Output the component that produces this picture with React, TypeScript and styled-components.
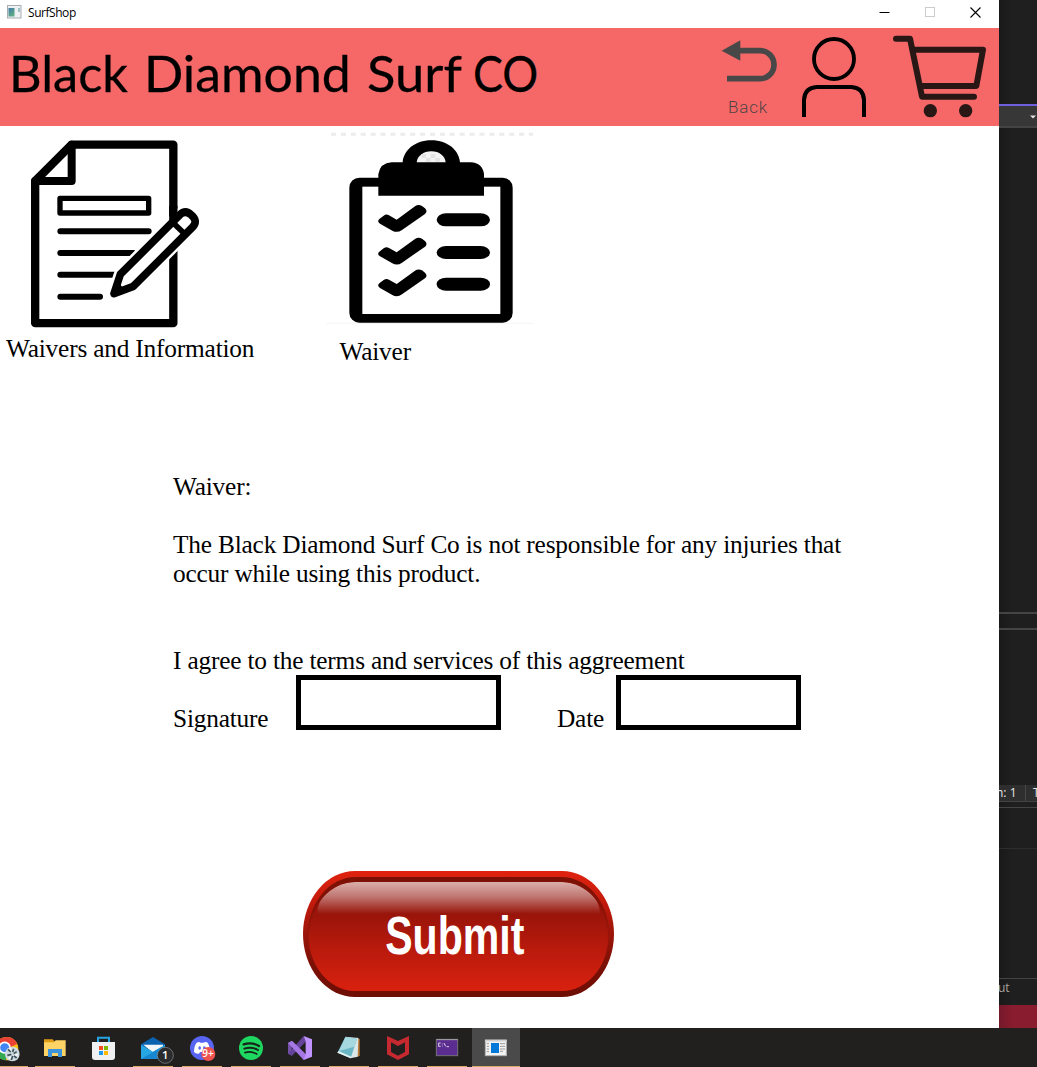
import React from "react";
import styled, { createGlobalStyle, css } from "styled-components";

const GlobalStyle = createGlobalStyle`
  *, *::before, *::after { box-sizing: border-box; }
  body { margin: 0; background: #1f1f1f; overflow: hidden; }
  svg { display: block; flex: none; }
`;

const serif = css`
  font-family: "Liberation Serif", "Times New Roman", serif;
  font-size: 25.33px;
  line-height: 29px;
  letter-spacing: -0.185px;
  color: #000;
`;

const Desktop = styled.div`
  display: grid;
  grid-template-columns: 999px 38px;
  grid-template-rows: 1028px 39px;
  width: 1037px;
  height: 1067px;
  overflow: hidden;
`;

const AppWindow = styled.main`
  display: flex;
  flex-direction: column;
  background: #fff;
  min-width: 0;
`;

const TitleBar = styled.div`
  display: flex;
  align-items: center;
  height: 28px;
  padding: 0 18px 4px 7px;
`;

const WindowName = styled.span`
  flex: 1;
  margin-left: 6px;
  padding-top: 2px;
  font: 12px/16px "Open Sans", sans-serif;
  letter-spacing: -0.45px;
  color: #000;
`;

const WindowControls = styled.div`
  display: flex;
  gap: 34.5px;
`;

const Header = styled.header`
  display: flex;
  align-items: flex-start;
  height: 98px;
  background: #f66868;
`;

const Brand = styled.h1`
  flex: 1;
  display: flex;
  margin: 13px 0 0 9px;
  font: 400 51px/64px Lato, Calibri, sans-serif;
  color: #000;
`;

const BrandWord = styled.span<{ $width: number; $stretch: number }>`
  flex: none;
  width: ${(p) => p.$width / p.$stretch}px;
  margin-right: ${(p) => p.$width - p.$width / p.$stretch}px;
  transform-origin: 0 50%;
  transform: scaleX(${(p) => p.$stretch});
  -webkit-text-stroke: 0.3px #000;
`;

const BackButton = styled.button`
  display: flex;
  flex-direction: column;
  align-items: center;
  width: 58px;
  margin: 12px 24px 0 0;
  padding: 0;
  border: 0;
  background: none;
`;

const BackLabel = styled.span`
  margin: 14px 0 0 -2px;
  font: 300 17px/20px Roboto, sans-serif;
  letter-spacing: 0.8px;
  color: #4e4444;
`;

const IconButton = styled.button<{ $top: number; $right: number }>`
  margin: ${(p) => p.$top}px ${(p) => p.$right}px 0 0;
  padding: 0;
  border: 0;
  background: none;
`;

const Shortcuts = styled.nav`
  display: flex;
  height: 346px;
`;

const Shortcut = styled.div<{ $width: number; $top: number }>`
  display: flex;
  flex-direction: column;
  width: ${(p) => p.$width}px;
  padding-top: ${(p) => p.$top}px;
`;

const ShortcutArt = styled.div<{ $indent: number }>`
  padding-left: ${(p) => p.$indent}px;
`;

const ShortcutLabel = styled.span<{ $indent: number; $top: number }>`
  ${serif}
  margin: ${(p) => p.$top}px 0 0 ${(p) => p.$indent}px;
  white-space: nowrap;
`;

const Agreement = styled.section`
  ${serif}
  width: 700px;
  margin-left: 173px;
`;

const Paragraph = styled.p<{ $gap: number }>`
  margin: 0 0 ${(p) => p.$gap}px;
`;

const SignRow = styled.div`
  display: flex;
  height: 55px;
`;

const FieldLabel = styled.label<{ $width: number }>`
  width: ${(p) => p.$width}px;
  padding-top: 29px;
`;

const Field = styled.input<{ $width: number; $gap?: number }>`
  width: ${(p) => p.$width}px;
  height: 55px;
  margin: 0 ${(p) => p.$gap ?? 0}px 0 0;
  padding: 0 8px;
  border: 5px solid #000;
  border-radius: 0;
  background: #fff;
  outline: 0;
`;

const Submit = styled.button`
  width: 311px;
  height: 126px;
  margin: 141px 0 0 302.5px;
  padding: 6px 5px 6px;
  border: 0;
  border-radius: 52px / 63px;
  background: linear-gradient(#e0220f, #c21a0b 25%, #9c1409 50%, #7a1006 75%, #6e0e05);
`;

const SubmitRim = styled.span`
  display: block;
  height: 100%;
  padding: 5px 1px 0;
  border-radius: 48px / 57px;
  background: linear-gradient(#7c1005, #851106 25%, #981409 50%, #b0180b);
`;

const SubmitFace = styled.span`
  display: flex;
  align-items: center;
  justify-content: center;
  position: relative;
  height: 100%;
  border-radius: 47px / 54px;
  overflow: hidden;
  background: linear-gradient(#98140a 28%, #b71a0c 60%, #d9210f);

  &::before {
    content: "";
    position: absolute;
    inset: 0 8px auto;
    height: 32px;
    border-radius: 40px 40px 0 0 / 34px 34px 0 0;
    background: linear-gradient(#dbaeab, #c07873 45%, #98140a);
  }
`;

const SubmitText = styled.span`
  position: relative;
  margin: -1px 0 0 -6px;
  font: 700 53px/60px "Liberation Sans", Arial, sans-serif;
  color: #fff;
  transform: scaleX(0.775);
`;

const Backdrop = styled.aside`
  display: flex;
  flex-direction: column;
  background: linear-gradient(90deg, #191919, #1f1f1f 14px);
  overflow: hidden;
`;

const Band = styled.div<{ $h: number; $color?: string }>`
  flex: none;
  height: ${(p) => p.$h}px;
  background: ${(p) => p.$color ?? "transparent"};
`;

const ToolStrip = styled(Band)`
  display: flex;
  align-items: center;
  justify-content: flex-end;
  padding: 2px 1px 0 0;
`;

const StatusStrip = styled(Band)`
  display: flex;
  font: 12px/16px "Open Sans", sans-serif;
  color: #e6e6e6;
  overflow: hidden;
`;

const StatusCell = styled.span<{ $width: number; $shift: number }>`
  flex: none;
  width: ${(p) => p.$width}px;
  height: 16px;
  border-right: 1px solid #484848;
  text-indent: ${(p) => p.$shift}px;
  white-space: nowrap;
  overflow: hidden;
`;

const OutputTab = styled(Band)`
  font: 12px/18px "Open Sans", sans-serif;
  color: #a9a59c;
  text-indent: -1px;
`;

const Taskbar = styled.footer`
  grid-column: 1 / -1;
  display: flex;
  gap: 1px;
  background: #22201f;
`;

const Task = styled.div<{ $running?: boolean; $active?: boolean; $first?: boolean }>`
  flex: none;
  display: flex;
  flex-direction: column;
  align-items: center;
  justify-content: space-between;
  width: 48px;
  margin-left: ${(p) => (p.$first ? -18 : 0)}px;
  background: ${(p) => (p.$active ? "#4b4a4a" : "transparent")};

  &::after {
    content: "";
    width: ${(p) => (p.$active ? 48 : p.$first ? 44 : 40)}px;
    height: 1px;
    background: ${(p) => (p.$running ? "#d9ac68" : "transparent")};
  }
`;

const Badge = styled.text`
  font-family: "Open Sans", sans-serif;
  font-weight: 600;
  fill: #fff;
`;

/* Icons use a grid three times finer than their on-screen size. */
type ArtProps = { box: [number, number, number, number]; children: React.ReactNode };
const Art = ({ box, children }: ArtProps) => (
  <svg width={box[2] / 3} height={box[3] / 3} viewBox={box.join(" ")} fill="none">
    {children}
  </svg>
);

const WindowIcon = () => (
  <svg width="15" height="14" viewBox="0 0 15 14">
    <defs>
      <linearGradient id="pane" x1="0" y1="0" x2="0.6" y2="1">
        <stop offset="0" stopColor="#3f78a8" />
        <stop offset="1" stopColor="#5fae84" />
      </linearGradient>
    </defs>
    <rect x="0.5" y="0.5" width="13.5" height="12.5" fill="#eef0f2" stroke="#a8adb2" />
    <rect x="1.5" y="3" width="6" height="8.5" fill="url(#pane)" />
    <rect x="11" y="3" width="2" height="4" fill="#9fc3c4" />
  </svg>
);

const BackIcon = () => (
  <Art box={[60, 117, 171, 129]}>
    <path d="M62 149 118 118V179Z" fill="#484848" />
    <path d="M114 149H178A41 42 0 0 1 178 233H78" stroke="#484848" strokeWidth="17" />
  </Art>
);

const UserIcon = () => (
  <Art box={[306, 111, 192, 240]}>
    <circle cx="402" cy="177" r="60" stroke="#000" strokeWidth="11.5" />
    <path d="M312 351V300Q314 263 350 261H454Q490 263 492 300V351" stroke="#000" strokeWidth="12" />
  </Art>
);

const CartIcon = () => (
  <Art box={[579, 105, 282, 249]}>
    <g stroke="#281714" strokeWidth="18" strokeLinecap="round" strokeLinejoin="round">
      <path d="M588 116H630L666 290H822" />
      <path d="M640 149H849L829 258H662" />
    </g>
    <circle cx="691" cy="332" r="20" fill="#281714" />
    <circle cx="797" cy="332" r="20" fill="#281714" />
  </Art>
);

const DocumentIcon = () => (
  <Art box={[90, 42, 510, 564]}>
    <g stroke="#000" strokeLinejoin="round" strokeLinecap="round">
      <path d="M105.500 165 214.500 56H520V591.500H105.500Z" strokeWidth="25" />
      <path d="M105.500 165H215V56" strokeWidth="24" />
      <path d="M180 217H446V261H180Z" strokeWidth="16" />
      <path d="M181 316H446M181 381H400M181 446H345M181 512H300" strokeWidth="18" />
    </g>
    <path
      d="M341 504 360 446 541 264Q556 251 572 264 594 284 579 301L400 482Z"
      fill="#fff"
      stroke="#fff"
      strokeWidth="38"
      strokeLinejoin="round"
    />
    <path d="M520 240V285" stroke="#000" strokeWidth="25" />
    <path
      d="M342 503 361 445 539 267Q556 250 574 267 595 285 578 303L400 481Z"
      fill="#fff"
      stroke="#000"
      strokeWidth="23"
      strokeLinejoin="round"
    />
    <path d="M520 291 552 322" stroke="#000" strokeWidth="17" />
    <path d="M347 501 360 475 369 486Z" fill="#000" />
  </Art>
);

const ClipboardIcon = () => (
  <Art box={[18, 15, 621, 579]}>
    <path d="M33 25H639" stroke="#ececec" strokeWidth="9" strokeDasharray="15 14.700" />
    <path d="M18 592H639" stroke="#f5f5f5" strokeWidth="3" />
    <rect x="88" y="155" width="490" height="435" rx="30" fill="#000" />
    <rect x="127" y="182" width="414" height="382" fill="#fff" />
    <path
      d="M175 209V145Q180 111 215 109H248C250 74 284 43 334 43S418 74 420 109H452Q488 111 492 145V209Z"
      fill="#000"
    />
    <path d="M290 109C292 90 310 76 334 76S375 90 377 109Z" fill="#f4f4f4" />
    <path d="M304 84h14v12h-14ZM332 84h14v12h-14ZM318 96h14v12h-14ZM346 96h14v12h-14Z" fill="#e4e4e4" />
    {[0, 98, 193].map((dy) => (
      <g key={dy} transform={`translate(0 ${dy})`} fill="#000">
        <path d="M178 279 191 269Q199 263 207 268L230 281 285 241Q295 234 306 240L315 247Q324 256 315 264L246 312Q232 322 217 314L180 293Q170 286 178 279Z" />
        <rect x="350" y="262" width="160" height="39" rx="28" ry="19.500" />
      </g>
    ))}
  </Art>
);

const ChromeIcon = () => (
  <Art box={[-54, 24, 144, 111]}>
    <circle cx="20" cy="86" r="35" fill="#fbc116" />
    <path d="M20 86-12 71A35 35 0 0 1 52 72Z" fill="#ea4335" />
    <path d="M20 86-12 71A35 35 0 0 0 18 121Z" fill="#34a853" />
    <circle cx="14" cy="83" r="16" fill="#4285f4" stroke="#fff" strokeWidth="5" />
    <circle cx="37" cy="102" r="22" fill="#cfdbe0" />
    <path d="M24 88l8 8M41 86l-3 10M50 95l-9 6M22 106l12-3M34 120l4-12M50 114l-8-6" stroke="#41545d" strokeWidth="5" />
    <path d="M30 84l3 6M54 104l-8 2M26 116l6-6" stroke="#fff" strokeWidth="4" />
  </Art>
);

const FolderIcon = () => (
  <Art box={[93, 24, 144, 111]}>
    <path d="M132 58H158L163 64H194V75H132Z" fill="#e09b14" />
    <path d="M132 67H162L167 61H197V108H132Z" fill="#fcd364" />
    <path d="M144 111V87H186V111H174V99H156V111Z" fill="#3c94dd" />
  </Art>
);

const StoreIcon = () => (
  <Art box={[240, 24, 144, 111]}>
    <path d="M294 71V53H327V71" stroke="#27a5e2" strokeWidth="6" />
    <path d="M276 66H345V111Q345 120 336 120H285Q276 120 276 111Z" fill="#eff0f2" />
    <path d="M297 78h12v12h-12Z" fill="#f25022" />
    <path d="M312 78h12v12h-12Z" fill="#7fba00" />
    <path d="M297 93h12v12h-12Z" fill="#1a9be8" />
    <path d="M312 93h12v12h-12Z" fill="#ffb900" />
  </Art>
);

const MailIcon = () => (
  <Art box={[387, 24, 144, 111]}>
    <path d="M423 73 459 51 495 73V85H423Z" fill="#0b62ae" />
    <path d="M430 74H489V90L459 98Z" fill="#f4f7fa" />
    <path d="M423 74 459 95 495 74V117H423Z" fill="#27a6e5" />
    <path d="M423 117 468 91 495 77V117Z" fill="#1687d0" />
    <circle cx="496" cy="106" r="24" fill="#292b2c" stroke="#8b9194" strokeWidth="2" />
    <Badge x="486" y="118" fontSize="34">1</Badge>
  </Art>
);

const DiscordIcon = () => (
  <Art box={[534, 24, 144, 111]}>
    <circle cx="606" cy="84" r="36" fill="#5865f2" />
    <path
      d="M590 68Q598 64 601 68H611Q616 64 623 68 631 81 629 97 623 103 615 101L611 96H600L597 101Q587 102 582 96 582 78 590 68Z"
      fill="#fff"
    />
    <ellipse cx="599" cy="84" rx="4" ry="5" fill="#5865f2" />
    <ellipse cx="613" cy="84" rx="4" ry="5" fill="#5865f2" />
    <circle cx="625" cy="102" r="21" fill="#ef5350" />
    <Badge x="607" y="112" fontSize="30">9+</Badge>
  </Art>
);

const SpotifyIcon = () => (
  <Art box={[681, 24, 144, 111]}>
    <circle cx="753" cy="84" r="36" fill="#1ed760" />
    <g stroke="#17221b" strokeLinecap="round">
      <path d="M731 73Q756 65 777 78" strokeWidth="7" />
      <path d="M733 86Q755 79 774 90" strokeWidth="6" />
      <path d="M735 98Q754 92 770 102" strokeWidth="5" />
    </g>
  </Art>
);

const VisualStudioIcon = () => (
  <Art box={[18, 24, 144, 111]}>
    <path d="M54 69 66 62 66 107 54 101Z" fill="#7450a8" />
    <path d="M65 77V93L73 85Z" fill="#22201f" />
    <path d="M54 101 66 107 107 65 101 48Z" fill="#65439a" />
    <path d="M54 69 66 62 114 109 101 120Z" fill="#a477e4" />
    <path d="M101 48 126 58V110L101 120 107 103V65Z" fill="#c193ff" />
  </Art>
);

const NotepadIcon = () => (
  <Art box={[165, 24, 144, 111]}>
    <path d="M260 52 269 58V108L256 112Z" fill="#b77c39" />
    <path d="M226 50 265 54 263 110 241 115Z" fill="#dbe6e8" />
    <path d="M226 51 261 56 242 115 202 98Z" fill="#69b7c5" />
    <path d="M226 51 261 56 253 80 207 93Z" fill="#a5d8df" />
    <path d="M202 98 242 115 244 110 206 93Z" fill="#e7f0f1" />
  </Art>
);

const ShieldIcon = () => (
  <Art box={[312, 24, 144, 111]}>
    <path
      d="M351 48 384 63 417 48V103L384 120 351 103ZM363 67V96L384 107 405 96V67L384 78Z"
      fill="#c62a30"
      fillRule="evenodd"
    />
  </Art>
);

const ConsoleIcon = () => (
  <Art box={[459, 24, 144, 111]}>
    <rect x="499" y="58" width="64" height="49" fill="#5c2d91" stroke="#77717b" strokeWidth="3" />
    <path d="M500 59H563" stroke="#a5a2a8" strokeWidth="3" />
    <path d="M512 69H506V79H512M517 71v2M517 77v2M522 69l5 10M530 80h7" stroke="#eee" strokeWidth="2.500" />
  </Art>
);

const FormAppIcon = () => (
  <Art box={[606, 24, 144, 111]}>
    <rect x="646" y="60" width="63" height="47" fill="#f3f3f3" stroke="#b5b5b5" strokeWidth="3" />
    <path d="M645 62H710" stroke="#cfcfcf" strokeWidth="5" />
    <rect x="663" y="69" width="24" height="30" fill="#0078d7" />
    <path d="M650 71h7M650 79h7M650 87h7M650 95h7M690 71h15M690 79h15M690 87h15M690 94h9" stroke="#999" strokeWidth="3" />
  </Art>
);

export default function App() {
  return (
    <>
      <GlobalStyle />
      <Desktop>
        <AppWindow>
          <TitleBar>
            <WindowIcon />
            <WindowName>SurfShop</WindowName>
            <WindowControls>
              <svg width="11" height="11" viewBox="0 0 11 11">
                <path d="M0.500 5.500H10.500" stroke="#000" />
              </svg>
              <svg width="11" height="11" viewBox="0 0 11 11">
                <rect x="0.500" y="0.500" width="9" height="9" fill="none" stroke="#ccc" />
              </svg>
              <svg width="11" height="11" viewBox="0 0 11 11">
                <path d="M0.500 0.500 10.500 10.500M10.500 0.500 0.500 10.500" stroke="#000" strokeWidth="1.100" />
              </svg>
            </WindowControls>
          </TitleBar>

          <Header>
            <Brand>
              <BrandWord $width={134.5} $stretch={0.99}>Black</BrandWord>
              <BrandWord $width={223.5} $stretch={1.015}>Diamond</BrandWord>
              <BrandWord $width={106.5} $stretch={1.03}>Surf</BrandWord>
              <BrandWord $width={70} $stretch={0.88}>CO</BrandWord>
            </Brand>
            <BackButton>
              <BackIcon />
              <BackLabel>Back</BackLabel>
            </BackButton>
            <IconButton $top={9} $right={27}>
              <UserIcon />
            </IconButton>
            <IconButton $top={7} $right={12}>
              <CartIcon />
            </IconButton>
          </Header>

          <Shortcuts>
            <Shortcut $width={326} $top={14}>
              <ShortcutArt $indent={30}>
                <DocumentIcon />
              </ShortcutArt>
              <ShortcutLabel $indent={6} $top={6}>
                Waivers and Information
              </ShortcutLabel>
            </Shortcut>
            <Shortcut $width={207} $top={5}>
              <ClipboardIcon />
              <ShortcutLabel $indent={13.5} $top={13}>
                Waiver
              </ShortcutLabel>
            </Shortcut>
          </Shortcuts>

          <Agreement>
            <Paragraph $gap={29}>Waiver:</Paragraph>
            <Paragraph $gap={58}>
              The Black Diamond Surf Co is not responsible for any injuries that
              <br />
              occur while using this product.
            </Paragraph>
            <Paragraph $gap={0}>I agree to the terms and services of this aggreement</Paragraph>
            <SignRow>
              <FieldLabel $width={123} htmlFor="signature">
                Signature
              </FieldLabel>
              <Field id="signature" $width={205} $gap={56} />
              <FieldLabel $width={59} htmlFor="date">
                Date
              </FieldLabel>
              <Field id="date" $width={185} />
            </SignRow>
          </Agreement>

          <Submit>
            <SubmitRim>
              <SubmitFace>
                <SubmitText>Submit</SubmitText>
              </SubmitFace>
            </SubmitRim>
          </Submit>
        </AppWindow>

        <Backdrop>
          <Band $h={104} />
          <Band $h={2} $color="#6e5fdc" />
          <ToolStrip $h={20} $color="#373737">
            <svg width="6" height="4" viewBox="0 0 6 4">
              <path d="M0 0.500H6L3 3.500Z" fill="#e5e5e5" />
            </svg>
          </ToolStrip>
          <Band $h={2} $color="#444" />
          <Band $h={484} />
          <Band $h={2} $color="#444" />
          <Band $h={14} />
          <Band $h={2} $color="#444" />
          <Band $h={155} />
          <StatusStrip $h={16} $color="#2e2e2e">
            <StatusCell $width={27} $shift={-3}>
              h: 1
            </StatusCell>
            <StatusCell $width={20} $shift={7}>
              T
            </StatusCell>
          </StatusStrip>
          <Band $h={1} $color="#444" />
          <Band $h={5} />
          <Band $h={1} $color="#444" />
          <Band $h={40} />
          <Band $h={1} $color="#2d2d2d" />
          <Band $h={129} />
          <Band $h={1} $color="#444" />
          <OutputTab $h={26}>ut</OutputTab>
          <Band $h={23} $color="linear-gradient(90deg, #74192a, #8a1c2f 14px)" />
        </Backdrop>

        <Taskbar>
          <Task $running $first><ChromeIcon /></Task>
          <Task $running><FolderIcon /></Task>
          <Task><StoreIcon /></Task>
          <Task $running><MailIcon /></Task>
          <Task $running><DiscordIcon /></Task>
          <Task $running><SpotifyIcon /></Task>
          <Task $running><VisualStudioIcon /></Task>
          <Task $running><NotepadIcon /></Task>
          <Task $running><ShieldIcon /></Task>
          <Task $running><ConsoleIcon /></Task>
          <Task $running $active><FormAppIcon /></Task>
        </Taskbar>
      </Desktop>
    </>
  );
}
